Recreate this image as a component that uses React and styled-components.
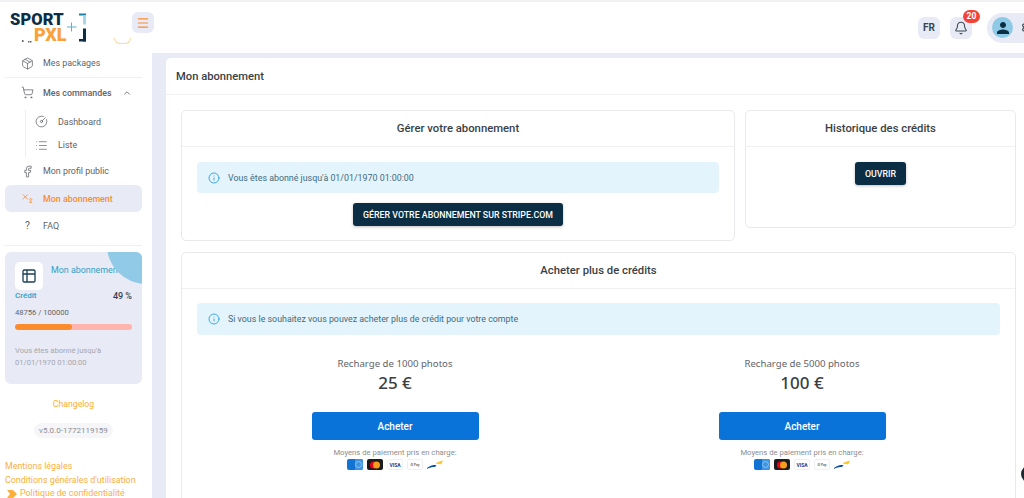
import React from "react";
import styled, { createGlobalStyle } from "styled-components";
import {
  Package,
  ShoppingCart,
  ChevronUp,
  CircleGauge,
  List,
  Subscript,
  Info,
  Bell,
  Menu,
  Table2,
  Settings,
  Facebook,
} from "lucide-react";
import { MdPerson } from "react-icons/md";

const Global = createGlobalStyle`
  html, body { margin: 0; padding: 0; height: 100%; overflow: hidden; background: #fff; }
  body { font-family: Roboto, "Liberation Sans", sans-serif; color: #3a3f45; }
  * { box-sizing: border-box; }
`;

const Page = styled.div`
  width: 1024px;
  height: 498px;
  overflow: hidden;
  display: flex;
  flex-direction: column;
  position: relative;
`;

const Header = styled.header`
  height: 53px;
  flex: none;
  border-top: 2px solid #f1f1f3;
  display: flex;
  align-items: center;
  padding: 0 0 0 10px;
  background: #fff;
  position: relative;
  z-index: 1;
`;

const Logo = styled.div`
  width: 122px;
  height: 42px;
  margin-top: 2px;
  position: relative;
  flex: none;
`;

const LogoSport = styled.span`
  position: absolute;
  left: 0;
  top: 5px;
  font-size: 16.5px;
  line-height: 13px;
  font-weight: 900;
  letter-spacing: 0.1px;
  color: #0b2e44;
`;

const LogoPxl = styled.span`
  position: absolute;
  left: 24px;
  top: 20px;
  font-size: 18px;
  line-height: 14px;
  font-weight: 900;
  color: #f9a13a;
`;

const LogoMark = styled.svg`
  position: absolute;
  left: 56px;
  top: 5px;
`;

const BurgerButton = styled.button`
  width: 22px;
  height: 21px;
  border: 0;
  padding: 0;
  border-radius: 6px;
  background: #e8eaf6;
  color: #fb8c2d;
  display: flex;
  align-items: center;
  justify-content: center;
  align-self: flex-start;
  margin-top: 10px;
`;

const HeaderRight = styled.div`
  margin-left: auto;
  display: flex;
  align-items: center;
  margin-right: -30px;
`;

const SquareButton = styled.div`
  width: 22px;
  height: 22px;
  margin-right: ${(p) => p.$gap}px;
  border-radius: 6px;
  background: #e8eaf6;
  color: #37474f;
  font-size: 10px;
  font-weight: 700;
  display: flex;
  align-items: center;
  justify-content: center;
  position: relative;
`;

const Badge = styled.span`
  position: absolute;
  top: -7px;
  right: -8px;
  min-width: 17px;
  height: 13px;
  padding: 0 3px;
  border-radius: 7px;
  background: #f44336;
  color: #fff;
  font-size: 8.5px;
  font-weight: 700;
  line-height: 13px;
  text-align: center;
`;

const AvatarPill = styled.div`
  width: 67px;
  height: 30px;
  border-radius: 15px;
  background: #e8eaf6;
  display: flex;
  align-items: center;
  padding-left: 5px;
  gap: 8px;
  color: #37474f;
`;

const Avatar = styled.div`
  width: 21px;
  height: 21px;
  border-radius: 50%;
  background: #8ecae6;
  color: #0b2e44;
  display: flex;
  align-items: center;
  justify-content: center;
`;

const Body = styled.div`
  flex: 1;
  display: flex;
  min-height: 0;
`;

const Sidebar = styled.aside`
  width: 152px;
  flex: none;
  padding: 0 10px 0 5px;
  display: flex;
  flex-direction: column;
  background: #fff;
  position: relative;
  z-index: 2;
`;

const ScrolledArc = styled.div`
  position: absolute;
  left: 114px;
  top: -15px;
  width: 17px;
  height: 6px;
  border: 1px solid #fbd9a0;
  border-top: 0;
  border-radius: 0 0 9px 9px;
`;

const ScrolledIcon = styled.svg`
  position: absolute;
  left: 22px;
  top: -13px;
`;

const NavItem = styled.div`
  height: ${(p) => p.$h || 27}px;
  flex: none;
  display: flex;
  align-items: center;
  gap: 9px;
  padding-left: 16px;
  padding-right: 10px;
  padding-bottom: ${(p) => p.$pb || 0}px;
  border-radius: 6px;
  font-size: 8.9px;
  white-space: nowrap;
  font-weight: ${(p) => (p.$active || p.$strong ? 500 : 400)};
  background: ${(p) => (p.$active ? "#e8eaf6" : "transparent")};
  color: ${(p) => (p.$active ? "#fb8c2d" : "#5f6368")};

  svg {
    flex: none;
    color: ${(p) => (p.$active ? "#fb8c2d" : "#5f6368")};
  }
`;

const NavDivider = styled.div`
  height: 1px;
  flex: none;
  background: #f0f0f3;
  margin: ${(p) => p.$margin || "0"};
`;

const SubList = styled.div`
  margin-left: 20px;
  margin-top: 3px;
  border-left: 1px solid #eeeef1;
  display: flex;
  flex-direction: column;

  ${NavItem} {
    height: 23.5px;
    padding-left: 9px;
    gap: 10px;
  }
`;

const FaqMark = styled.span`
  width: 13px;
  flex: none;
  text-align: center;
  font-size: 10.5px;
`;

const Chevron = styled(ChevronUp)`
  margin-left: auto;
`;

const UsageCard = styled.div`
  height: 132px;
  flex: none;
  margin-top: 6px;
  border-radius: 6px;
  background: #e8eaf6;
  padding: 10px 10px 0;
  position: relative;
  overflow: hidden;
`;

const Corner = styled.div`
  position: absolute;
  right: -43px;
  top: -46px;
  width: 78px;
  height: 78px;
  border-radius: 50%;
  background: #90cae6;
  z-index: 1;
`;

const UsageTop = styled.div`
  display: flex;
  gap: 8px;
`;

const UsageIcon = styled.div`
  width: 28px;
  height: 28px;
  border-radius: 5px;
  background: #fff;
  color: #1d4257;
  display: flex;
  align-items: center;
  justify-content: center;
  flex: none;
`;

const UsageTitle = styled.div`
  font-size: 8.9px;
  line-height: 12px;
  margin-top: 2px;
  color: #2f9fc7;
  white-space: nowrap;
`;

const UsageRow = styled.div`
  display: flex;
  justify-content: space-between;
  align-items: center;
  height: 11px;
`;

const CreditLabel = styled.span`
  font-size: 8px;
  font-weight: 500;
  color: #2f9fc7;
`;

const Percent = styled.span`
  font-size: 9px;
  font-weight: 500;
  color: #3a3f45;
`;

const Count = styled.div`
  font-size: 7.6px;
  color: #5f6368;
  margin-top: 7px;
  line-height: 10px;
`;

const Track = styled.div`
  height: 6px;
  border-radius: 3px;
  background: #ffb4ae;
  margin-top: 6px;
  overflow: hidden;
`;

const Fill = styled.div`
  height: 100%;
  background: #fb8c2d;
  border-radius: 3px;
`;

const UsageNote = styled.div`
  font-size: 7.6px;
  line-height: 12px;
  color: #a4a7ae;
  margin-top: 15px;
`;

const Changelog = styled.div`
  text-align: center;
  font-size: 8.7px;
  color: #fbb03b;
  margin-top: 14px;
  line-height: 12px;
`;

const Version = styled.div`
  align-self: center;
  margin-top: 13px;
  height: 15px;
  padding: 0 5px;
  border-radius: 8px;
  background: #f6f6f8;
  font-size: 8px;
  line-height: 15px;
  color: #8b8e94;
`;

const LegalLinks = styled.div`
  margin-top: 22px;
  display: flex;
  flex-direction: column;
  color: #fbb03b;
  font-size: 8.9px;
  line-height: 13.5px;
  white-space: nowrap;
`;

const LegalRow = styled.div`
  display: flex;
  align-items: center;
  gap: 3px;
  padding-left: ${(p) => (p.$marked ? 2 : 0)}px;
`;

const Main = styled.main`
  flex: 1;
  min-width: 0;
  background: #e8eaf6;
  padding: 5px 0 0 14px;
`;

const Panel = styled.section`
  background: #fff;
  height: 100%;
  border-radius: 5px 0 0 0;
  display: flex;
  flex-direction: column;
`;

const PanelTitle = styled.h1`
  margin: 0;
  height: 37px;
  flex: none;
  padding: 0 0 0 10px;
  border-bottom: 1px solid #f1f1f4;
  font-size: 11.2px;
  font-weight: 500;
  line-height: 38px;
  color: #3a3f45;
`;

const Content = styled.div`
  padding: 15px 8px 0 15px;
  display: grid;
  grid-template-columns: 554px 271px;
  grid-template-rows: 131px auto;
  column-gap: 10px;
  row-gap: 11px;
`;

const Card = styled.div`
  border: 1px solid #e9e9ed;
  border-radius: 5px;
  background: #fff;
  align-self: start;
  grid-column: ${(p) => p.$span || "auto"};
  height: ${(p) => p.$h}px;
`;

const CardHead = styled.h2`
  margin: 0;
  height: 36px;
  border-bottom: 1px solid #f1f1f4;
  font-size: 11.3px;
  font-weight: 500;
  line-height: 35px;
  text-align: center;
  color: #3a3f45;
`;

const CardBody = styled.div`
  padding: ${(p) => p.$pad};
  display: flex;
  flex-direction: column;
  align-items: center;
`;

const Alert = styled.div`
  align-self: stretch;
  height: ${(p) => p.$h}px;
  border-radius: 4px;
  background: #e4f4fc;
  display: flex;
  align-items: center;
  gap: 8px;
  padding-left: 11px;
  font-size: 8.85px;
  color: #3f6b80;

  svg {
    color: #2d9fe3;
    flex: none;
  }
`;

const DarkButton = styled.button`
  height: 23px;
  margin-top: ${(p) => p.$top}px;
  padding: 0 ${(p) => p.$px}px;
  border: 0;
  border-radius: 3px;
  background: #0b2e44;
  color: #fff;
  font-family: inherit;
  font-size: 8.8px;
  font-weight: 500;
  box-shadow: 0 1px 3px rgba(0, 0, 0, 0.25);
`;

const Offers = styled.div`
  align-self: stretch;
  display: grid;
  grid-template-columns: 396px 396px;
  column-gap: 11px;
  margin-top: 22px;
`;

const Offer = styled.div`
  display: flex;
  flex-direction: column;
  align-items: center;
`;

const OfferName = styled.div`
  font-family: "Noto Sans", Roboto, sans-serif;
  font-size: 9.65px;
  line-height: 14px;
  color: #5f6368;
`;

const OfferPrice = styled.div`
  font-family: "Noto Sans", Roboto, sans-serif;
  font-size: 17px;
  line-height: 23px;
  font-weight: 500;
  color: #3a3f45;
`;

const BuyButton = styled.button`
  width: 167px;
  height: 28px;
  margin-top: 18px;
  border: 0;
  border-radius: 3px;
  background: #0a73d9;
  color: #fff;
  font-family: inherit;
  font-size: 10px;
  font-weight: 500;
`;

const PayLabel = styled.div`
  margin-top: 8px;
  font-size: 7.7px;
  line-height: 10px;
  color: #8b8e94;
`;

const PayRow = styled.div`
  display: flex;
  gap: 4px;
  margin-top: 1px;
  align-items: center;
`;

const PayCard = styled.div`
  width: 16px;
  height: 11px;
  border-radius: 2px;
  display: flex;
  align-items: center;
  justify-content: center;
  background: ${(p) => p.$bg};
  border: ${(p) => (p.$line ? "1px solid #f0f0f3" : "0")};
  color: ${(p) => p.$color || "#fff"};
  font-size: ${(p) => p.$size || 4}px;
  font-weight: 700;
  overflow: hidden;
`;

const ChatBubble = styled.div`
  position: absolute;
  left: 1021px;
  top: 465px;
  width: 18px;
  height: 18px;
  border-radius: 50%;
  background: #1f2a30;
`;

const PayIcons = () => (
  <PayRow>
    <PayCard $bg="#1173d4">
      <svg width="16" height="11" viewBox="0 0 16 11">
        <rect x="8" width="8" height="11" fill="#3f95e0" />
        <circle cx="11.500" cy="5.500" r="3" fill="none" stroke="#a9d3f5" strokeWidth="0.7" />
      </svg>
    </PayCard>
    <PayCard $bg="#1c1c1c">
      <svg width="12" height="8" viewBox="0 0 12 8">
        <circle cx="4.500" cy="4" r="3.500" fill="#eb001b" />
        <circle cx="7.500" cy="4" r="3.500" fill="#f79e1b" />
      </svg>
    </PayCard>
    <PayCard $bg="#fff" $line $color="#1a3a8f" $size={5}>VISA</PayCard>
    <PayCard $bg="#fff" $line $color="#777" $size={3.5}>G Pay</PayCard>
    <svg width="16" height="11" viewBox="0 0 16 11">
      <path d="M0 9 C3 6.500 6 6 9.500 6 L8 8 C5 8 2.500 8.500 0 10 Z" fill="#0b4ea2" />
      <path d="M8.500 4.500 C10.500 3 13 2 16 1.500 L14.500 5 C12.500 5.500 10.500 5 8.500 4.500 Z" fill="#fdc82f" />
    </svg>
  </PayRow>
);

const App = () => {
  return (
    <Page>
      <Global />
      <Header>
        <Logo>
          <LogoSport>SPORT</LogoSport>
          <LogoPxl>PXL</LogoPxl>
          <LogoMark width="32" height="34" viewBox="0 0 32 34">
            <path d="M1 14h9.500M5.500 9.500v9" stroke="#56b4d8" strokeWidth="1" fill="none" />
            <path d="M13 0.500h7v2h-7z" fill="#1b7fa6" />
            <path d="M17 2.500h3v9h-3z" fill="#a6d8ec" />
            <path d="M17 15.500h3v13h-3z" fill="#0b2e44" />
            <path d="M13 26h7v2.500h-7z" fill="#0b2e44" />
          </LogoMark>
        </Logo>
        <BurgerButton>
          <Menu size={14} strokeWidth={2} />
        </BurgerButton>
        <HeaderRight>
          <SquareButton $gap={10}>FR</SquareButton>
          <SquareButton $gap={15}>
            <Bell size={14} strokeWidth={1.8} />
            <Badge>20</Badge>
          </SquareButton>
          <AvatarPill>
            <Avatar>
              <MdPerson size={18} />
            </Avatar>
            <Settings size={13} />
          </AvatarPill>
        </HeaderRight>
      </Header>
      <Body>
        <Sidebar>
          <ScrolledArc />
          <ScrolledIcon width="10" height="3" viewBox="0 0 10 3">
            <path d="M0 0h1.500v2H0zM6 1h1.500v1.500H6zM8 1h1.500v1.500H8z" fill="#5f6368" />
          </ScrolledIcon>
          <NavItem $h={24} $pb={4}>
            <Package size={13} strokeWidth={1.4} />
            Mes packages
          </NavItem>
          <NavDivider />
          <NavItem $h={29} $strong>
            <ShoppingCart size={13} strokeWidth={1.4} />
            Mes commandes
            <Chevron size={10} />
          </NavItem>
          <SubList>
            <NavItem>
              <CircleGauge size={13} strokeWidth={1.4} />
              Dashboard
            </NavItem>
            <NavItem>
              <List size={13} strokeWidth={1.3} />
              Liste
            </NavItem>
          </SubList>
          <NavItem $h={28}>
            <Facebook size={13} strokeWidth={1.4} />
            Mon profil public
          </NavItem>
          <NavItem $active>
            <Subscript size={13} strokeWidth={1.6} />
            Mon abonnement
          </NavItem>
          <NavItem>
            <FaqMark>?</FaqMark>
            FAQ
          </NavItem>
          <NavDivider $margin="6px 0 0" />
          <UsageCard>
            <Corner />
            <UsageTop>
              <UsageIcon>
                <Table2 size={16} strokeWidth={2} />
              </UsageIcon>
              <UsageTitle>Mon abonnement</UsageTitle>
            </UsageTop>
            <UsageRow>
              <CreditLabel>Crédit</CreditLabel>
              <Percent>49 %</Percent>
            </UsageRow>
            <Count>48756 / 100000</Count>
            <Track>
              <Fill style={{ width: `${(48756 / 100000) * 100}%` }} />
            </Track>
            <UsageNote>
              Vous êtes abonné jusqu'à
              <br />
              01/01/1970 01:00:00
            </UsageNote>
          </UsageCard>
          <Changelog>Changelog</Changelog>
          <Version>v5.0.0-1772119159</Version>
          <LegalLinks>
            <LegalRow>Mentions légales</LegalRow>
            <LegalRow>Conditions générales d'utilisation</LegalRow>
            <LegalRow $marked>
              <svg width="10" height="8" viewBox="0 0 10 8">
                <path d="M0 0h6l4 4-4 4H0l3-4z" fill="#fbb03b" />
              </svg>
              Politique de confidentialité
            </LegalRow>
          </LegalLinks>
        </Sidebar>
        <Main>
          <Panel>
            <PanelTitle>Mon abonnement</PanelTitle>
            <Content>
              <Card $h={131}>
                <CardHead>Gérer votre abonnement</CardHead>
                <CardBody $pad="15px 15px 0">
                  <Alert $h={31}>
                    <Info size={12} strokeWidth={1.8} />
                    Vous êtes abonné jusqu'à 01/01/1970 01:00:00
                  </Alert>
                  <DarkButton $top={10} $px={10}>GÉRER VOTRE ABONNEMENT SUR STRIPE.COM</DarkButton>
                </CardBody>
              </Card>
              <Card $h={118}>
                <CardHead>Historique des crédits</CardHead>
                <CardBody $pad="15px 0 0">
                  <DarkButton $top={0} $px={10}>OUVRIR</DarkButton>
                </CardBody>
              </Card>
              <Card $span="1 / span 2" $h={300}>
                <CardHead>Acheter plus de crédits</CardHead>
                <CardBody $pad="14px 15px 0">
                  <Alert $h={32}>
                    <Info size={12} strokeWidth={1.8} />
                    Si vous le souhaitez vous pouvez acheter plus de crédit pour votre compte
                  </Alert>
                  <Offers>
                    <Offer>
                      <OfferName>Recharge de 1000 photos</OfferName>
                      <OfferPrice>25 €</OfferPrice>
                      <BuyButton>Acheter</BuyButton>
                      <PayLabel>Moyens de paiement pris en charge:</PayLabel>
                      <PayIcons />
                    </Offer>
                    <Offer>
                      <OfferName>Recharge de 5000 photos</OfferName>
                      <OfferPrice>100 €</OfferPrice>
                      <BuyButton>Acheter</BuyButton>
                      <PayLabel>Moyens de paiement pris en charge:</PayLabel>
                      <PayIcons />
                    </Offer>
                  </Offers>
                </CardBody>
              </Card>
            </Content>
          </Panel>
        </Main>
      </Body>
      <ChatBubble />
    </Page>
  );
};

export default App;
